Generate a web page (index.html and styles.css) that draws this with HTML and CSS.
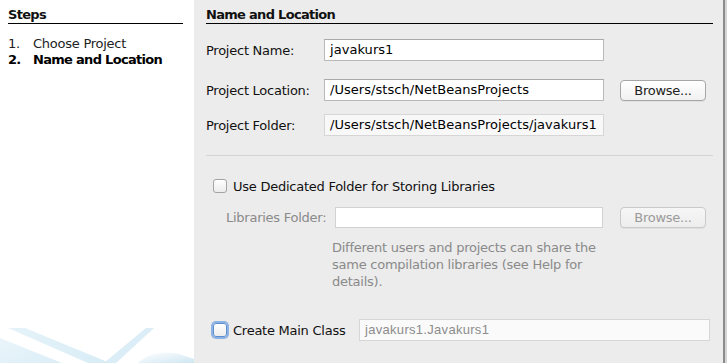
FILE: index.html
```html
<!DOCTYPE html>
<html>
<head>
<meta charset="utf-8">
<link rel="stylesheet" href="styles.css">
</head>
<body>
<div class="wizard">
  <aside class="steps-panel">
    <div class="steps-title">Steps</div>
    <ol class="steps-list">
      <li class="step"><span class="step-num">1.</span><span>Choose Project</span></li>
      <li class="step step-current"><span class="step-num">2.</span><span>Name and Location</span></li>
    </ol>
    <svg class="swoosh" width="194" height="40" viewBox="0 0 194 40">
      <defs>
        <linearGradient id="g1" x1="0" y1="0" x2="1" y2="0">
          <stop offset="0" stop-color="#e6f3f9"/>
          <stop offset="1" stop-color="#d8ecf6"/>
        </linearGradient>
        <linearGradient id="g2" x1="0" y1="0" x2="1" y2="1">
          <stop offset="0" stop-color="#ffffff"/>
          <stop offset="1" stop-color="#cfe6f2"/>
        </linearGradient>
        <linearGradient id="g3" x1="0" y1="0" x2="1" y2="1">
          <stop offset="0" stop-color="#eaf5fa"/>
          <stop offset="1" stop-color="#dceef7"/>
        </linearGradient>
      </defs>
      <polygon points="8,5 25,5 110,40 88,40" fill="url(#g1)"/>
      <polygon points="0,15 0,40 62,40" fill="url(#g3)"/>
      <polygon points="146,5 154,5 116,40 104,40" fill="#dbedf6"/>
      <path d="M138,40 C148,30 166,27 182,32 L194,36 L194,40 Z" fill="url(#g2)"/>
    </svg>
  </aside>
  <main class="main-panel">
    <div class="section-title">Name and Location</div>
    <div class="form-row row-name">
      <label class="label">Project Name:</label>
      <div class="field">javakurs1</div>
    </div>
    <div class="form-row row-location">
      <label class="label">Project Location:</label>
      <div class="field">/Users/stsch/NetBeansProjects</div>
      <button class="btn">Browse...</button>
    </div>
    <div class="form-row row-folder">
      <label class="label">Project Folder:</label>
      <div class="field field-readonly">/Users/stsch/NetBeansProjects/javakurs1</div>
    </div>
    <div class="separator"></div>
    <div class="check-row row-dedicated">
      <span class="checkbox"></span>
      <span>Use Dedicated Folder for Storing Libraries</span>
    </div>
    <div class="lib-row">
      <label class="label label-disabled">Libraries Folder:</label>
      <div class="field field-disabled"></div>
      <button class="btn btn-disabled">Browse...</button>
    </div>
    <p class="hint">Different users and projects can share the same compilation libraries (see Help for details).</p>
    <div class="check-row row-main">
      <span class="checkbox checkbox-focus"></span>
      <span class="main-label">Create Main Class</span>
      <div class="field field-main">javakurs1.Javakurs1</div>
    </div>
  </main>
  <div class="edge"></div>
</div>
</body>
</html>
```

FILE: styles.css
```css
* { box-sizing: border-box; }
html, body { margin: 0; padding: 0; }
body {
  width: 727px;
  height: 363px;
  overflow: hidden;
  font-family: "DejaVu Sans", sans-serif;
  font-size: 13px;
  letter-spacing: -0.25px;
  color: #111;
  background: #ffffff;
}
.wizard {
  display: flex;
  height: 363px;
}
.steps-panel {
  width: 194px;
  flex: none;
  background: #ffffff;
  padding: 0 11px 0 8px;
  display: flex;
  flex-direction: column;
}
.steps-title, .section-title {
  padding-top: 7px;
  line-height: 16px;
  font-weight: bold;
  letter-spacing: -0.7px;
  border-bottom: 1px solid #000;
}
.steps-list {
  list-style: none;
  margin: 12px 0 0 0;
  padding: 0;
}
.step {
  display: flex;
  line-height: 16px;
  color: #222;
}
.step-num { width: 25px; flex: none; }
.step-current { font-weight: bold; color: #000; letter-spacing: -0.7px; }
.swoosh {
  display: block;
  margin-top: auto;
  margin-left: -8px;
  flex: none;
}
.main-panel {
  flex: 1;
  background: #ececec;
  padding: 0 10px 0 12px;
}
.edge {
  width: 4px;
  flex: none;
  border-left: 2px solid #8c8c8c;
  background: #d4d4d4;
}
.form-row {
  display: grid;
  grid-template-columns: 102px 280px 86px;
  column-gap: 16px;
  align-items: center;
  height: 22px;
}
.row-name { margin-top: 15px; }
.row-location { margin-top: 18px; }
.row-folder { margin-top: 13px; }
.label { color: #111; white-space: nowrap; }
.field {
  height: 22px;
  background: #fff;
  border: 1px solid #b9b9b9;
  border-top-color: #a9a9a9;
  padding: 0 5px;
  line-height: 20px;
  letter-spacing: 0.05px;
  white-space: nowrap;
  overflow: hidden;
  color: #000;
}
.field-readonly {
  background: #f8f8f8;
  border-color: #d6d6d6;
}
.btn {
  height: 21px;
  font: inherit;
  letter-spacing: inherit;
  color: #222;
  border: 1px solid #a6a6a6;
  border-radius: 4px;
  background: linear-gradient(#ffffff, #f1f1f1);
  padding: 0;
  box-shadow: 0 1px 0 rgba(0,0,0,0.05);
}
.btn-disabled {
  color: #9a9a9a;
  border-color: #c9c9c9;
  background: linear-gradient(#f6f6f6, #ededed);
}
.separator {
  margin-top: 19px;
  height: 1px;
  background: #d4d4d4;
}
.check-row {
  display: flex;
  align-items: center;
}
.row-dedicated {
  margin-top: 22px;
  height: 16px;
  padding-left: 7px;
}
.checkbox {
  width: 14px;
  height: 14px;
  flex: none;
  border: 1px solid #a4a4a4;
  border-radius: 3px;
  background: linear-gradient(#ffffff, #ececec);
  margin-right: 6px;
}
.checkbox-focus {
  border-color: #5d8fd0;
  box-shadow: 0 0 0 2px rgba(110, 160, 225, 0.75);
}
.lib-row {
  display: grid;
  grid-template-columns: 92px 268px 86px;
  column-gap: 17px;
  align-items: center;
  height: 21px;
  margin-top: 13px;
  padding-left: 20px;
}
.label-disabled { color: #8a8a8a; }
.field-disabled {
  height: 21px;
  border-color: #d2d2d2;
}
.hint {
  margin: 11px 0 0 126px;
  width: 272px;
  line-height: 17px;
  color: #8a8a8a;
}
.row-main {
  margin-top: 29px;
  height: 22px;
  padding-left: 7px;
}
.main-label { width: 126px; flex: none; }
.field-main {
  width: 351px;
  background: #fafafa;
  border-color: #d6d6d6;
  color: #8c8c8c;
  font-family: "Liberation Sans", Arial, sans-serif;
  letter-spacing: 0.3px;
}
```
